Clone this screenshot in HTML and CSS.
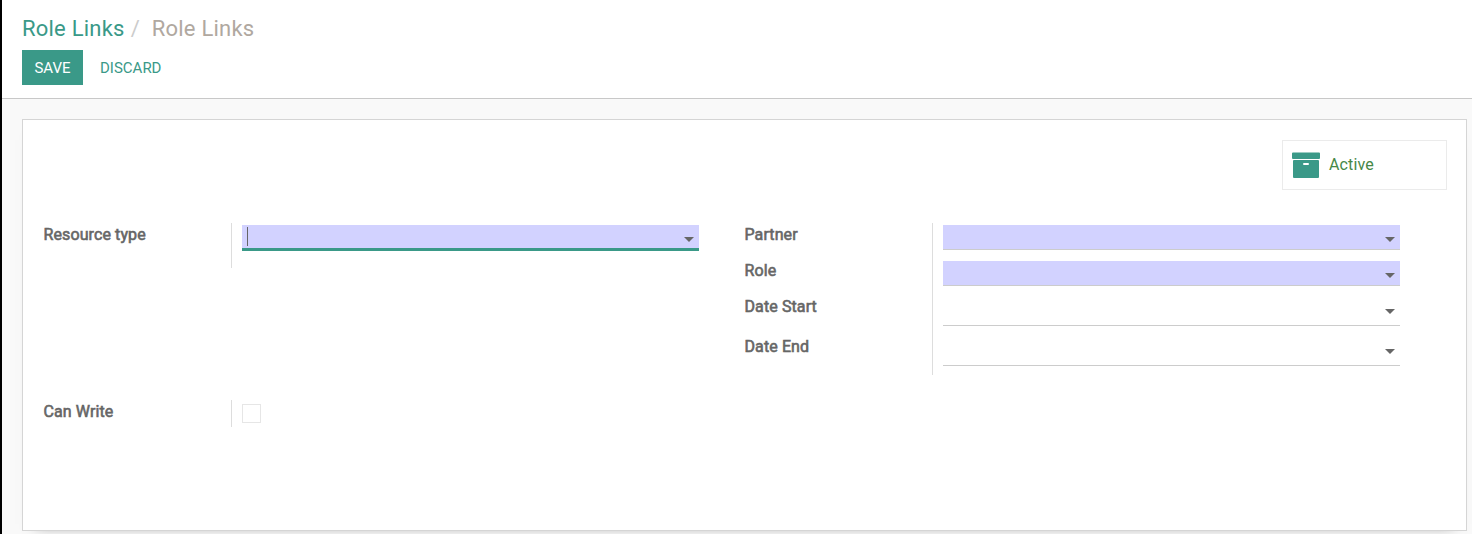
FILE: index.html
```html
<!DOCTYPE html>
<html lang="en">
<head>
<meta charset="utf-8">
<title>Role Links</title>
<link rel="stylesheet" href="styles.css">
</head>
<body>
<header class="control-panel">
  <nav class="breadcrumb"><a class="crumb">Role Links</a><span class="separator">/</span><span class="current">Role Links</span></nav>
  <div class="actions"><button class="btn primary">SAVE</button><button class="btn link">DISCARD</button></div>
</header>
<main class="content">
  <section class="sheet">
    <div class="button-box">
      <button class="stat">
        <svg class="archive" width="28" height="26" viewBox="0 0 28 26"><path fill="#3a9988" d="M1 .4h26q1 0 1 1V6q0 1-1 1H1Q0 7 0 6V1.400Q0 .4 1 .4ZM2 8h24q1 0 1 1v16q0 1-1 1H2q-1 0-1-1V9q0-1 1-1Z"/><rect x="11" y="11" width="6" height="2" rx="1" fill="#fff"/></svg>
        <span class="stat-text">Active</span>
      </button>
    </div>
    <div class="groups">
      <div class="group left">
        <div class="row"><label class="label">Resource type</label><div class="cell"><div class="field required focused"><span class="caret"></span><span class="arrow"></span></div></div></div>
      </div>
      <div class="group">
        <div class="row"><label class="label">Partner</label><div class="cell"><div class="field required"><span class="arrow"></span></div></div></div>
        <div class="row"><label class="label">Role</label><div class="cell"><div class="field required"><span class="arrow"></span></div></div></div>
        <div class="row date"><label class="label">Date Start</label><div class="cell"><div class="field"><span class="arrow"></span></div></div></div>
        <div class="row date"><label class="label">Date End</label><div class="cell"><div class="field"><span class="arrow"></span></div></div></div>
      </div>
    </div>
    <div class="group permissions">
      <div class="row check"><label class="label">Can Write</label><div class="cell"><span class="checkbox"></span></div></div>
    </div>
  </section>
</main>
</body>
</html>
```
FILE: styles.css
```css
* { box-sizing: border-box; }
body {
  margin: 0;
  height: 534px;
  overflow: hidden;
  display: flex;
  flex-direction: column;
  border-left: 2px solid #000;
  background: #f9f9f9;
  color: #666;
  font: 16px/24px Roboto, sans-serif;
}
button { margin: 0; font: inherit; }
.control-panel {
  flex: none;
  height: 99px;
  padding: 12px 20px 0;
  background: #fff;
  border-bottom: 1px solid #c8c8c8;
}
.breadcrumb { display: flex; height: 38px; font-size: 22px; line-height: 33px; }
.crumb { color: #3a9988; letter-spacing: .22px; }
.separator { margin: 0 12px 0 6px; color: #ccc; }
.current { color: #b0a8a0; letter-spacing: .22px; }
.actions { display: flex; gap: 4px; }
.btn { height: 35px; padding: 1px 12px 0; border: 1px solid transparent; background: none; font-size: 15px; line-height: 33px; }
.primary { width: 61px; padding: 1px 0 0; background: #3a9988; border-color: #3a9988; color: #fff; }
.link { color: #3a9988; }
.content { flex: 1; padding: 20px 5px 0 20px; }
.sheet {
  height: 412px;
  padding: 20px 19px 0 20px;
  background: #fff;
  border: 1px solid #d5d5d5;
  box-shadow: 0 7px 14px -14px rgba(0, 0, 0, .6);
}
.button-box { display: flex; justify-content: flex-end; height: 83px; }
.stat { display: flex; width: 165px; height: 50px; padding: 11px 9px; gap: 9px; background: #fff; border: 1px solid #ebebeb; }
.archive { flex: none; }
.stat-text { color: #468847; line-height: 25px; letter-spacing: .15px; }
.groups { display: flex; gap: 45px; height: 177px; }
.group { width: 656px; }
.row { display: flex; height: 36px; }
.left .row { height: 45px; }
.row.date { height: 40px; }
.row.check { height: 27px; }
.label { width: 188px; padding-left: .5px; font-weight: 400; line-height: 23px; letter-spacing: .1px; -webkit-text-stroke: .6px #666; }
.cell { flex: 1; border-left: 1px solid #ddd; padding: 2px 0 0 10px; }
.field { display: flex; justify-content: flex-end; height: 25px; padding: 12px 5px 0; border-bottom: 1px solid #ccc; }
.date .field { height: 29px; }
.required { background: #d2d2ff; }
.focused { height: 26px; border-bottom: 3px solid #3a9988; justify-content: space-between; }
.caret { width: 1px; height: 19px; margin-top: -10px; background: #666; }
.arrow { border: 5px solid transparent; border-top-color: #666; border-bottom: 0; height: 5px; }
.check .cell { padding-top: 4px; }
.checkbox { display: block; width: 19px; height: 19px; border: 1px solid #e6e6e6; background: #fff; }
```
